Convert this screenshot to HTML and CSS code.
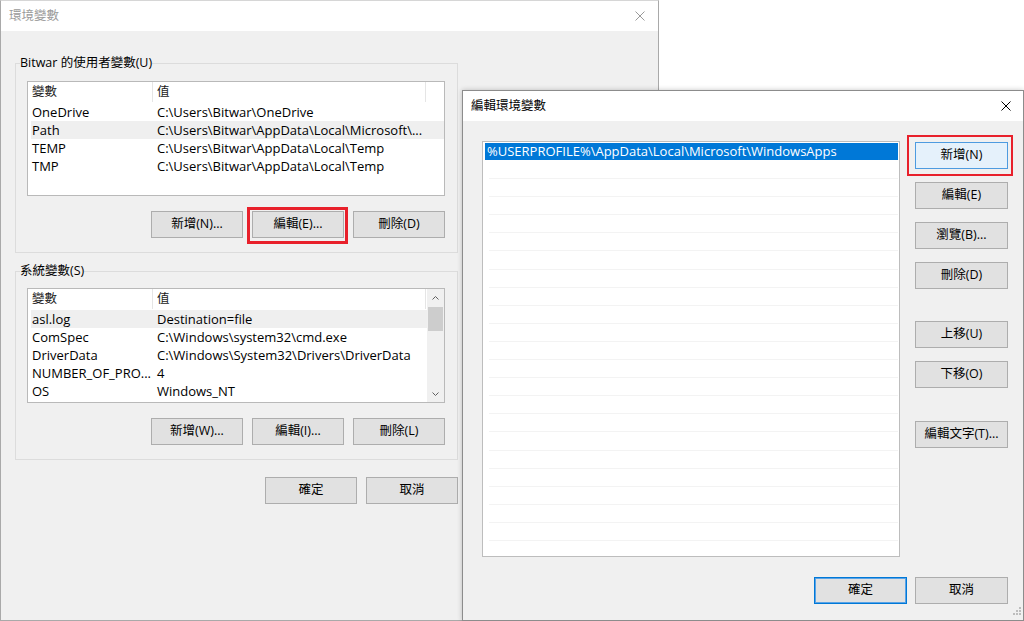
FILE: index.html
```html
<!DOCTYPE html>
<html lang="zh-Hant">
<head>
<meta charset="utf-8">
<title>環境變數</title>
<link rel="stylesheet" href="styles.css">
</head>
<body>
<div class="desktop">

  <section class="win win-env">
    <header class="titlebar inactive">
      <span class="title">環境變數</span>
      <svg class="close" width="10" height="10" viewBox="0 0 10 10"><path d="M0.5 0.5L9.5 9.5M9.5 0.5L0.5 9.5"/></svg>
    </header>
    <div class="env-body">
      <div class="env-col">
        <fieldset class="group g1">
          <legend>Bitwar 的使用者變數(U)</legend>
          <div class="group-inner">
            <div class="lv">
              <div class="lv-main">
                <div class="lv-head"><span>變數</span><span>值</span></div>
                <div class="lv-rows">
                  <div class="lv-row"><span>OneDrive</span><span>C:\Users\Bitwar\OneDrive</span></div>
                  <div class="lv-row hot"><span>Path</span><span>C:\Users\Bitwar\AppData\Local\Microsoft\...</span></div>
                  <div class="lv-row"><span>TEMP</span><span>C:\Users\Bitwar\AppData\Local\Temp</span></div>
                  <div class="lv-row"><span>TMP</span><span>C:\Users\Bitwar\AppData\Local\Temp</span></div>
                </div>
              </div>
            </div>
            <div class="btn-row">
              <button class="btn">新增(N)...</button>
              <button class="btn hl hl-left">編輯(E)...</button>
              <button class="btn">刪除(D)</button>
            </div>
          </div>
        </fieldset>

        <fieldset class="group g2">
          <legend>系統變數(S)</legend>
          <div class="group-inner">
            <div class="lv">
              <div class="lv-main">
                <div class="lv-head"><span>變數</span><span>值</span></div>
                <div class="lv-rows">
                  <div class="lv-row hot"><span>asl.log</span><span>Destination=file</span></div>
                  <div class="lv-row"><span>ComSpec</span><span>C:\Windows\system32\cmd.exe</span></div>
                  <div class="lv-row"><span>DriverData</span><span>C:\Windows\System32\Drivers\DriverData</span></div>
                  <div class="lv-row"><span>NUMBER_OF_PRO...</span><span>4</span></div>
                  <div class="lv-row"><span>OS</span><span>Windows_NT</span></div>
                </div>
              </div>
              <div class="sb">
                <div class="sb-btn"><svg width="7" height="4" viewBox="0 0 7 4"><path d="M0.5 3.5L3.5 0.5L6.5 3.5"/></svg></div>
                <div class="sb-thumb"></div>
                <div class="sb-track"></div>
                <div class="sb-btn"><svg width="7" height="4" viewBox="0 0 7 4"><path d="M0.5 0.5L3.5 3.5L6.5 0.5"/></svg></div>
              </div>
            </div>
            <div class="btn-row">
              <button class="btn">新增(W)...</button>
              <button class="btn">編輯(I)...</button>
              <button class="btn">刪除(L)</button>
            </div>
          </div>
        </fieldset>

        <div class="btn-row dialog-row">
          <button class="btn">確定</button>
          <button class="btn">取消</button>
        </div>
      </div>
    </div>
  </section>

  <section class="win win-edit">
    <header class="titlebar">
      <span class="title">編輯環境變數</span>
      <svg class="close" width="10" height="10" viewBox="0 0 10 10"><path d="M0.5 0.5L9.5 9.5M9.5 0.5L0.5 9.5"/></svg>
    </header>
    <div class="edit-body">
      <div class="edit-main">
        <div class="pathlist">
          <div class="path-sel">%USERPROFILE%\AppData\Local\Microsoft\WindowsApps</div>
          <div class="path-lines"></div>
        </div>
        <div class="side">
          <button class="btn btn-w hover hl hl-right">新增(N)</button>
          <button class="btn btn-w">編輯(E)</button>
          <button class="btn btn-w">瀏覽(B)...</button>
          <button class="btn btn-w">刪除(D)</button>
          <button class="btn btn-w sp32">上移(U)</button>
          <button class="btn btn-w">下移(O)</button>
          <button class="btn btn-w sp33">編輯文字(T)...</button>
        </div>
      </div>
      <div class="edit-bottom">
        <button class="btn btn-w default">確定</button>
        <button class="btn btn-w">取消</button>
      </div>
    </div>
    <svg class="grip" width="10" height="10" viewBox="0 0 10 10">
      <rect x="8" y="0" width="2" height="2"/>
      <rect x="5" y="3" width="2" height="2"/><rect x="8" y="3" width="2" height="2"/>
      <rect x="2" y="6" width="2" height="2"/><rect x="5" y="6" width="2" height="2"/><rect x="8" y="6" width="2" height="2"/>
    </svg>
  </section>

</div>
</body>
</html>
```

FILE: styles.css
```css
* { box-sizing: border-box; }
html, body { margin: 0; padding: 0; }
body {
  width: 1024px;
  height: 621px;
  overflow: hidden;
  background: #ffffff;
  font-family: "Open Sans", "Noto Sans CJK TC", sans-serif;
  font-size: 12.5px;
  color: #000;
}
.desktop { position: relative; width: 1024px; height: 621px; overflow: hidden; }

.win { position: absolute; background: #f0f0f0; display: flex; flex-direction: column; }
.win-env {
  left: 0; top: 0; width: 659px; height: 621px;
  border: 1px solid #a9a9a9;
  border-top-color: #d6d6d6;
}
.win-edit {
  left: 462px; top: 90px; width: 562px; height: 531px;
  border: 1px solid #8c8c8c;
  box-shadow: 0 0 5px rgba(0, 0, 0, 0.22);
}

.titlebar {
  height: 30px; flex-shrink: 0;
  background: #fff;
  display: flex; align-items: center; justify-content: space-between;
  padding-left: 8px;
}
.titlebar .title { line-height: 18px; }
.titlebar.inactive .title { color: #9a9a9a; }
.close { fill: none; stroke: #000; stroke-width: 1; }
.win-env .close { margin-right: 13px; stroke: #9a9a9a; }
.win-edit .close { margin-right: 12px; }

/* left dialog */
.env-body { padding-left: 14px; }
.env-col { width: 443px; }

.group { margin: 0; padding: 0; border: 1px solid #dcdcdc; width: 443px; min-width: 0; }
.group legend { margin-left: 4px; padding: 0; line-height: 18px; }
.g1 { margin-top: 23px; }
.g2 { margin-top: 9px; }
.group-inner { padding: 9px 12px 14px 11px; }
.g2 .group-inner { padding-top: 8px; }

.lv {
  height: 115px;
  border: 1px solid #b9b9b9;
  background: #fff;
  display: flex;
  overflow: hidden;
}
.lv-main { flex: 1; min-width: 0; padding-left: 3px; overflow: hidden; }
.lv-head, .lv-row { display: grid; grid-template-columns: 122px 273px; }
.lv-head { height: 20px; }
.lv-head span { line-height: 20px; border-right: 1px solid #e5e5e5; padding-left: 1px; color: #1a1a1a; }
.lv-head span + span { padding-left: 4px; }
.lv-rows { padding-top: 0.5px; }
.lv-row { height: 18px; line-height: 18px; white-space: nowrap; font-size: 13px; }
.lv-row span { padding-left: 1px; overflow: hidden; }
.lv-row span + span { padding-left: 4px; }
.lv-row.hot { background: #efefef; }

.sb { width: 17px; flex-shrink: 0; background: #f0f0f0; display: flex; flex-direction: column; align-items: center; }
.sb-btn { width: 17px; height: 17px; display: flex; align-items: center; justify-content: center; }
.sb-btn svg { fill: none; stroke: #606060; stroke-width: 1; }
.sb-thumb { width: 15px; height: 24px; margin-top: 1px; background: #cdcdcd; }
.sb-track { flex: 1; }

.btn {
  width: 92px; height: 27px; padding: 0;
  background: #e1e1e1;
  border: 1px solid #adadad;
  font: inherit; color: #000; line-height: 1;
  display: flex; align-items: center; justify-content: center;
  white-space: nowrap;
}
.btn-row { display: flex; justify-content: flex-end; gap: 9px; margin-top: 15px; }
.dialog-row { margin-top: 17px; }

.hl { position: relative; }
.hl::after { content: ""; position: absolute; pointer-events: none; }
.hl-left::after { top: -5px; right: -5px; bottom: -7px; left: -6px; border: 3px solid #e8202b; }
.hl-right::after { top: -8px; right: -6px; bottom: -8px; left: -9px; border: 2px solid #e8202b; }

/* right dialog */
.edit-body { padding: 20px 15px 0 19px; display: flex; flex-direction: column; }
.edit-main { display: flex; }
.pathlist {
  width: 418px; height: 416px;
  border: 1px solid #bdbdbd;
  background: #fff;
  padding: 1px 1px 0 2px;
  overflow: hidden;
}
.path-sel {
  height: 17px; line-height: 17px;
  background: #0078d7; color: #fff;
  padding-left: 2px; white-space: nowrap;
  font-size: 13px;
}
.path-lines {
  margin: 1px 0 0 4px;
  height: 381px;
  background: repeating-linear-gradient(to bottom, transparent 0, transparent 17.1px, #f3f3f3 17.1px, #f3f3f3 18.1px);
}
.side { display: flex; flex-direction: column; gap: 13px; margin-left: 15px; padding-top: 1px; }
.btn-w { width: 93px; }
.btn.hover { background: #e5f1fb; border-color: #4d9be0; }
.sp32 { margin-top: 19px; }
.sp33 { margin-top: 20px; }
.edit-bottom { display: flex; justify-content: flex-end; gap: 8px; margin-top: 20px; }
.btn.default { border-color: #0078d7; box-shadow: inset 0 0 0 1px #5aa3e6; }

.grip { position: absolute; right: 2px; bottom: 3px; fill: #bdbdbd; }
```
